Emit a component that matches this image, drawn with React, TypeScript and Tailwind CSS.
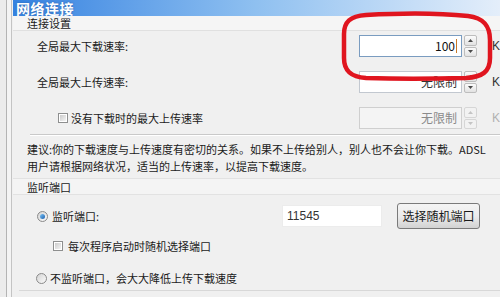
import React from 'react';

const cjk = "font-['Noto_Sans_CJK_SC','Noto_Sans',sans-serif]";

function Spinner({ disabled }: { disabled?: boolean }) {
  const fill = disabled ? '#c4c4c4' : '#4a4a4a';
  const btn =
    'flex flex-1 items-center justify-center rounded-[2px] border ' +
    (disabled
      ? 'border-[#d6d6d6] bg-[#f2f2f2]'
      : 'border-[#bdbdbd] bg-linear-to-b from-[#fbfbfb] to-[#e2e2e2]');
  return (
    <div className="ml-[2px] flex h-[22px] w-[13px] flex-col gap-[1px]">
      <div className={btn}>
        <svg width="5" height="3" viewBox="0 0 5 3">
          <path d="M2.5 0L5 3H0z" fill={fill} />
        </svg>
      </div>
      <div className={btn}>
        <svg width="5" height="3" viewBox="0 0 5 3">
          <path d="M0 0h5L2.5 3z" fill={fill} />
        </svg>
      </div>
    </div>
  );
}

function Checkbox() {
  return (
    <span className="flex h-[10px] w-[10px] shrink-0 items-center justify-center border border-[#8e8f8f] bg-white">
      <span className="h-[6px] w-[6px] bg-linear-to-br from-[#cbcbcb] to-[#f4f4f4]" />
    </span>
  );
}

function Radio({ checked }: { checked?: boolean }) {
  return (
    <span className="flex h-[11px] w-[11px] shrink-0 items-center justify-center rounded-full border border-[#8a8a8a] bg-linear-to-br from-[#d4d4d4] to-[#fbfbfb]">
      {checked && (
        <span className="h-[5px] w-[5px] rounded-full bg-linear-to-br from-[#7cc4f4] to-[#1a5fae]" />
      )}
    </span>
  );
}

function RateRow({
  label,
  value,
  disabled,
  focused,
  check,
}: {
  label: string;
  value: string;
  disabled?: boolean;
  focused?: boolean;
  check?: boolean;
}) {
  return (
    <div className="flex h-[22px] items-center">
      {check ? (
        <div className="flex w-[347px] items-center gap-[3px] pl-[45px]">
          <Checkbox />
          <span className="text-[11px] text-[#1a1a1a]">{label}</span>
        </div>
      ) : (
        <div className="w-[347px] pl-[24px] text-[11px] text-[#1a1a1a]">{label}</div>
      )}
      <div
        className={
          'flex h-[22px] w-[103px] items-center justify-end border pr-[4px] text-[12px] ' +
          (focused
            ? 'border-[#7a9cc0] bg-white text-[#111]'
            : disabled
            ? 'border-[#cfcfcf] bg-[#f4f4f4] text-[#8a8a8a]'
            : 'border-[#c2c8d0] bg-white text-[#333]')
        }
      >
        {value}
        {focused && <span className="ml-[1px] h-[14px] w-[1px] bg-[#c87a2a]" />}
      </div>
      <Spinner disabled={disabled} />
      <span
        className={
          "ml-[15px] font-['Liberation_Sans',sans-serif] text-[12px] " +
          (disabled ? 'text-[#b0b0b0]' : 'text-[#333]')
        }
      >
        K
      </span>
    </div>
  );
}

export default function App() {
  return (
    <div className={`relative flex h-[297px] w-[500px] overflow-hidden bg-[#f0f0f0] ${cjk}`}>
      {/* window frame on the left */}
      <div className="flex h-full w-[13px] shrink-0">
        <div className="w-[6px] bg-[#ececec]" />
        <div className="w-[1px] bg-[#b4b4b4]" />
        <div className="w-[4px] bg-[#f4f4f4]" />
        <div className="w-[1px] bg-[#c4c4c4]" />
        <div className="w-[1px] bg-[#f0f0f0]" />
      </div>

      <div className="flex min-w-0 flex-1 flex-col">
        {/* title */}
        <div className="flex h-[16px] items-center bg-linear-to-r from-[#3482e0] via-[#8fc0f0] to-[#e4eefa] pl-[3px]">
          <div className="text-[14px] leading-[14px] font-bold tracking-[0.5px] text-white [text-shadow:0_0_2px_#2a5fa8]">
            网络连接
          </div>
        </div>

        {/* section header */}
        <div className="h-[15px] border-b border-[#e0e0e0] bg-[#f5f5f5] pl-[14px] text-[11px] leading-[15px] text-[#1a1a1a]">
          连接设置
        </div>

        <div className="mt-[4px] flex flex-col gap-[14px]">
          <RateRow label="全局最大下载速率:" value="100" focused />
          <RateRow label="全局最大上传速率:" value="无限制" />
          <RateRow label="没有下载时的最大上传速率" value="无限制" disabled check />
        </div>

        <div className="mt-[5px] ml-[17px] border-t border-[#c9c9c9] border-b border-b-white" />

        <div className="mt-[5px] pl-[14px] text-[11px] leading-[17px] text-[#1a1a1a]">
          <div className="whitespace-nowrap">
            建议:你的下载速度与上传速度有密切的关系。如果不上传给别人，别人也不会让你下载。ADSL
          </div>
          <div className="whitespace-nowrap">用户请根据网络状况，适当的上传速率，以提高下载速度。</div>
        </div>

        <div className="mt-[3px] h-[17px] border-t border-b border-[#e2e2e2] bg-[#f4f4f4] pl-[14px] text-[11px] leading-[17px] text-[#1a1a1a]">
          监听端口
        </div>

        {/* listen port row */}
        <div className="mt-[8px] flex h-[26px] items-center">
          <div className="flex w-[269px] items-center gap-[4px] pl-[24px]">
            <Radio checked />
            <span className="text-[11px] text-[#1a1a1a]">监听端口:</span>
          </div>
          <div className="flex h-[22px] w-[100px] items-center border border-[#ececec] bg-white pl-[4px] font-['Liberation_Sans',sans-serif] text-[12px] text-[#333]">
            11545
          </div>
          <button className="ml-[15px] flex h-[26px] w-[83px] items-center justify-center rounded-[3px] border border-[#7a7a7a] bg-linear-to-b from-[#f4f4f4] via-[#ececec] to-[#d2d2d2] text-[12px] text-[#1a1a1a]">
            选择随机端口
          </button>
        </div>

        <div className="mt-[9px] flex h-[16px] items-center gap-[5px] pl-[40px]">
          <Checkbox />
          <span className="text-[11px] text-[#1a1a1a]">每次程序启动时随机选择端口</span>
        </div>

        <div className="mt-[16px] flex h-[16px] items-center gap-[3px] pl-[23px]">
          <Radio />
          <span className="text-[11px] text-[#1a1a1a]">不监听端口，会大大降低上传下载速度</span>
        </div>

        <div className="mt-[4px] ml-[6px] border-t border-[#d8d8d8]" />
      </div>

      {/* red annotation */}
      <svg className="pointer-events-none absolute top-0 left-0" width="500" height="297">
        <path
          d="M366 15 C400 13 440 13 468 16 C484 18 490 26 490 40 L490 58 C490 72 482 77 466 78 C430 79 395 79 366 78 C350 77 344 70 344 58 L344 34 C344 22 350 16 366 15 Z"
          fill="none"
          stroke="#e0151f"
          strokeWidth="4.5"
        />
      </svg>
    </div>
  );
}
